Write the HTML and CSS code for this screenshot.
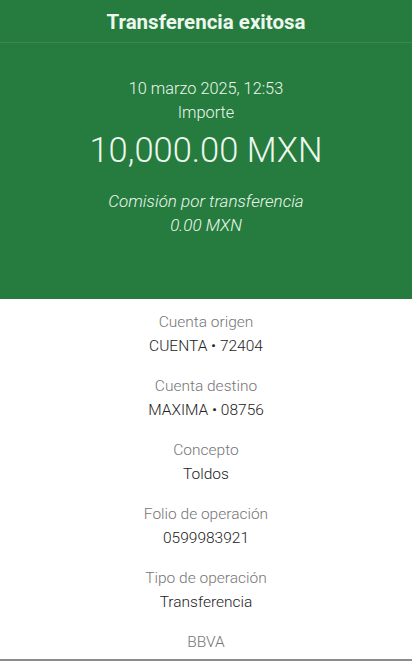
FILE: index.html
```html
<!doctype html>
<html>
<head>
	<meta charset="utf-8">
	<title>Transferencia exitosa</title>
	<link rel="stylesheet" href="styles.css">
</head>
<body>
	<main>
		<header class="summary">
			<h1 class="summary-title">Transferencia exitosa</h1>
			<div class="summary-body">
				<p class="summary-date">10 marzo 2025, 12:53</p>
				<p class="summary-label">Importe</p>
				<p class="summary-amount">10,000.00 MXN</p>
				<p class="summary-fee">Comisión por transferencia</p>
				<p class="summary-fee">0.00 MXN</p>
			</div>
		</header>
		<section class="details">
			<div class="detail">
				<p class="detail-label">Cuenta origen</p>
				<p class="detail-value">CUENTA • 72404</p>
			</div>
			<div class="detail">
				<p class="detail-label">Cuenta destino</p>
				<p class="detail-value">MAXIMA • 08756</p>
			</div>
			<div class="detail">
				<p class="detail-label">Concepto</p>
				<p class="detail-value">Toldos</p>
			</div>
			<div class="detail">
				<p class="detail-label">Folio de operación</p>
				<p class="detail-value">0599983921</p>
			</div>
			<div class="detail">
				<p class="detail-label">Tipo de operación</p>
				<p class="detail-value">Transferencia</p>
			</div>
			<div class="detail">
				<p class="detail-label">BBVA</p>
			</div>
		</section>
	</main>
</body>
</html>
```

FILE: styles.css
```css
html, body {
	margin: 0;
	padding: 0;
}

body {
	font-family: Roboto, "Liberation Sans", sans-serif;
	background: white;
}

p, h1 {
	margin: 0;
}

main {
	height: 661px;
	display: flex;
	flex-direction: column;
	border-bottom: 2px solid #8c8c8c;
	box-sizing: border-box;
}

.summary {
	background: #257c3e;
	color: #eef7ee;
	height: 299px;
	text-align: center;
}

.summary-title {
	height: 43px;
	line-height: 45px;
	font-size: 20.5px;
	font-weight: 700;
	border-bottom: 1px solid #3a8a50;
	box-sizing: border-box;
}

.summary-body {
	padding-top: 34px;
	font-weight: 300;
}

.summary-date,
.summary-label {
	font-size: 16.3px;
	line-height: 24px;
}

.summary-amount {
	font-size: 34.5px;
	line-height: 50px;
	margin-bottom: 14px;
}

.summary-fee {
	font-size: 17px;
	line-height: 24px;
	font-style: italic;
}

.details {
	padding-top: 11px;
	display: flex;
	flex-direction: column;
	gap: 16px;
	text-align: center;
	font-weight: 300;
	font-size: 15.5px;
	line-height: 24px;
}

.detail-label {
	color: #767676;
}

.detail-value {
	color: #222;
}
```
